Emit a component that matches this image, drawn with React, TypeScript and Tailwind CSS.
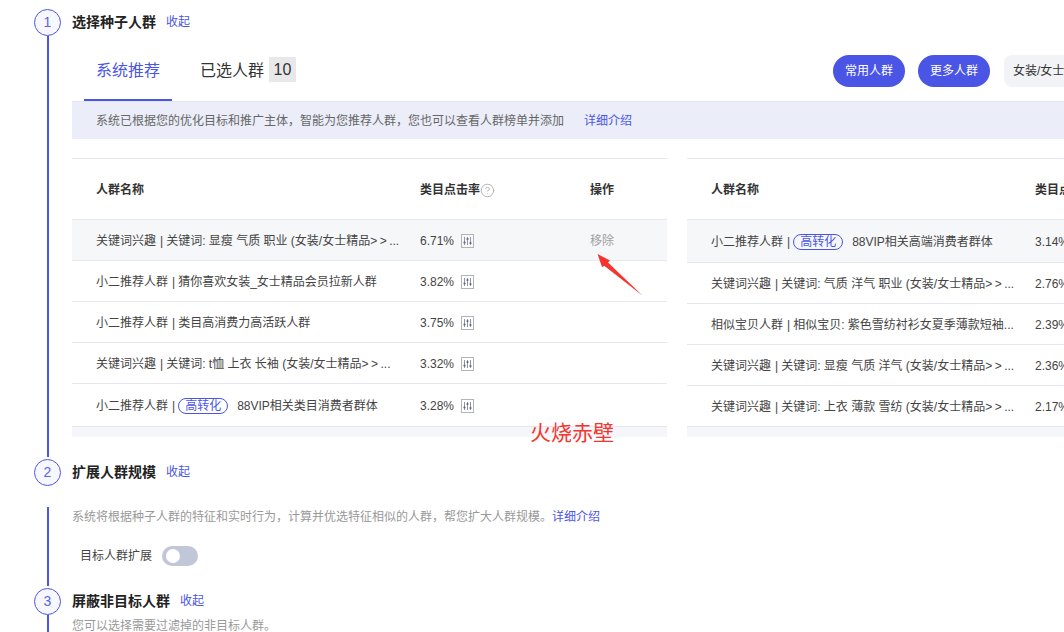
import { CircleHelp } from "lucide-react";

type Row = {
  tag: string;
  name: string;
  rate: string;
  high?: boolean;
};

const leftRows: Row[] = [
  { tag: "关键词兴趣", name: "关键词: 显瘦 气质 职业 (女装/女士精品>>...", rate: "6.71%" },
  { tag: "小二推荐人群", name: "猜你喜欢女装_女士精品会员拉新人群", rate: "3.82%" },
  { tag: "小二推荐人群", name: "类目高消费力高活跃人群", rate: "3.75%" },
  { tag: "关键词兴趣", name: "关键词: t恤 上衣 长袖 (女装/女士精品>>...", rate: "3.32%" },
  { tag: "小二推荐人群", name: "88VIP相关类目消费者群体", rate: "3.28%", high: true },
];

const rightRows: Row[] = [
  { tag: "小二推荐人群", name: "88VIP相关高端消费者群体", rate: "3.14%", high: true },
  { tag: "关键词兴趣", name: "关键词: 气质 洋气 职业 (女装/女士精品>>...", rate: "2.76%" },
  { tag: "相似宝贝人群", name: "相似宝贝: 紫色雪纺衬衫女夏季薄款短袖...", rate: "2.39%" },
  { tag: "关键词兴趣", name: "关键词: 显瘦 气质 洋气 (女装/女士精品>>...", rate: "2.36%" },
  { tag: "关键词兴趣", name: "关键词: 上衣 薄款 雪纺 (女装/女士精品>>...", rate: "2.17%" },
];

const StepCircle = ({ n }: { n: number }) => (
  <div className="w-[27px] h-[27px] shrink-0 rounded-full border border-[#4a55e5] bg-[#f7f8ff] flex items-center justify-center text-[14px] text-[#5a64e8]">
    {n}
  </div>
);

const TrendIcon = () => (
  <svg width="13" height="14" viewBox="0 0 13 14" fill="none" className="shrink-0">
    <rect x="0.5" y="0.5" width="12" height="13" stroke="#b4b4b4" />
    <path d="M3.5 3v8M6.5 3v8M9.5 3v8" stroke="#8a94b8" strokeWidth="1" />
    <circle cx="3.5" cy="8.5" r="1.1" fill="#666" />
    <circle cx="6.5" cy="5" r="1.1" fill="#666" />
    <circle cx="9.5" cy="9" r="1.1" fill="#666" />
  </svg>
);

const Name = ({ text }: { text: string }) => {
  const parts = text.split(">>");
  if (parts.length === 1) return <span>{text}</span>;
  return (
    <span>
      {parts[0]}
      <span className="tracking-[2.5px]">{">>"}</span>
      {parts[1]}
    </span>
  );
};

const NameCell = ({ row }: { row: Row }) => (
  <div className="flex items-center whitespace-nowrap">
    <span>{row.tag}</span>
    <span className="ml-[4px] mr-[3px]">|</span>
    {row.high && (
      <span className="h-[16px] w-[50px] rounded-full border border-[#4a55e5] text-[#4a55e5] flex items-center justify-center leading-none mr-[9px]">
        高转化
      </span>
    )}
    <Name text={row.name} />
  </div>
);

const LeftTable = () => (
  <div className="w-[595px] shrink-0">
    <div className="h-[62px] border-y border-[#e6e7f0] flex items-center pl-[24px] pt-[2px] font-bold text-[#333]">
      <div className="w-[324px]">人群名称</div>
      <div className="w-[170px] flex items-center">
        类目点击率
        <CircleHelp size={15} strokeWidth={1.4} className="text-[#aaa]" />
      </div>
      <div>操作</div>
    </div>
    {leftRows.map((row, i) => (
      <div
        key={row.name}
        className={`border-b border-[#e6e7f0] flex items-center pl-[24px] pt-[2px] text-[#444] ${
          i === 0 ? "bg-[#f6f7f9]" : ""
        } ${i === 4 ? "h-[43px]" : "h-[41px]"}`}
      >
        <div className="w-[324px]">
          <NameCell row={row} />
        </div>
        <div className="w-[170px] flex items-center gap-[7px]">
          {row.rate}
          <TrendIcon />
        </div>
        {i === 0 && <div className="text-[#a0a0a0]">移除</div>}
      </div>
    ))}
    <div className="h-[10px] bg-[#f5f6f9]" />
  </div>
);

const RightTable = () => (
  <div className="w-[400px] shrink-0">
    <div className="h-[62px] border-y border-[#e6e7f0] flex items-center pl-[24px] pt-[2px] font-bold text-[#333]">
      <div className="w-[324px] shrink-0">人群名称</div>
      <div className="whitespace-nowrap">类目点击率</div>
    </div>
    {rightRows.map((row, i) => (
      <div
        key={row.name}
        className={`border-b border-[#e6e7f0] flex items-center pl-[24px] pt-[2px] text-[#444] ${
          i === 0 ? "h-[43px] bg-[#f6f7f9]" : "h-[41px]"
        }`}
      >
        <div className="w-[324px] shrink-0">
          <NameCell row={row} />
        </div>
        <div>{row.rate}</div>
      </div>
    ))}
    <div className="h-[10px] bg-[#f5f6f9]" />
  </div>
);

const StepTitle = ({ title }: { title: string }) => (
  <div className="flex items-center h-[27px] pb-[1px] gap-[10px]">
    <span className="font-bold text-[14px] text-[#222]">{title}</span>
    <span className="text-[#4a55e5]">收起</span>
  </div>
);

export default function App() {
  return (
    <div
      className="relative w-[1064px] h-[632px] overflow-hidden bg-white text-[12px] text-[#333] pl-[34px] pt-[9px]"
      style={{ fontFamily: '"Liberation Sans", "Noto Sans CJK SC", sans-serif' }}
    >
      {/* step 1 */}
      <div className="flex h-[448px]">
        <div className="w-[27px] shrink-0 flex flex-col items-center">
          <StepCircle n={1} />
          <div className="w-[2px] h-[421px] bg-[#4a55e5]" />
        </div>
        <div className="ml-[11px] w-[1100px] shrink-0">
          <StepTitle title="选择种子人群" />
          <div className="flex items-start h-[65px] pt-[19px]">
            <div className="ml-[12px] w-[88px] h-[46px] border-b-2 border-[#4a55e5] text-[16px] leading-[32px] text-[#4a55e5] text-center">
              系统推荐
            </div>
            <div className="ml-[28px] h-[25px] mt-[2px] flex items-center text-[16px] text-[#333]">
              <span className="pt-[2px]">已选人群</span>
              <span className="h-[25px] w-[27px] bg-[#e8e8ea] flex items-center justify-center ml-[5px]">10</span>
            </div>
            <div className="ml-[537px] flex items-center gap-[13px]">
              <div className="w-[72px] h-[32px] rounded-full bg-[#4a55e5] text-white flex items-center justify-center">常用人群</div>
              <div className="w-[72px] h-[32px] rounded-full bg-[#4a55e5] text-white flex items-center justify-center">更多人群</div>
              <div className="w-[120px] h-[32px] rounded-[8px] bg-[#f2f3f6] flex items-center pl-[9px] ml-px whitespace-nowrap">女装/女士精品</div>
            </div>
          </div>
          <div className="h-[38px] bg-[#ebedf9] border-t border-[#e3e5f2] flex items-center pl-[24px] text-[#666]">
            系统已根据您的优化目标和推广主体，智能为您推荐人群，您也可以查看人群榜单并添加
            <span className="ml-[20px] text-[#4a55e5]">详细介绍</span>
          </div>
          <div className="flex gap-[20px] mt-[19px]">
            <LeftTable />
            <RightTable />
          </div>
        </div>
      </div>

      {/* step 2 */}
      <div className="flex h-[129px] mt-[2px]">
        <div className="w-[27px] shrink-0 flex flex-col items-center">
          <StepCircle n={2} />
          <div className="w-[2px] h-[79px] mt-[21px] bg-[#4a55e5]" />
        </div>
        <div className="ml-[11px]">
          <StepTitle title="扩展人群规模" />
          <div className="mt-[22px] text-[#999]">
            系统将根据种子人群的特征和实时行为，计算并优选特征相似的人群，帮您扩大人群规模。
            <span className="text-[#4a55e5]">详细介绍</span>
          </div>
          <div className="flex items-center mt-[20px] ml-[8px] text-[#444]">
            目标人群扩展
            <div className="ml-[10px] w-[36px] h-[20px] rounded-full bg-[#c1c6d9] flex items-center pl-[4px]">
              <div className="w-[14px] h-[14px] rounded-full bg-white" />
            </div>
          </div>
        </div>
      </div>

      {/* step 3 */}
      <div className="flex">
        <div className="w-[27px] shrink-0 flex flex-col items-center">
          <StepCircle n={3} />
          <div className="w-[2px] h-[20px] bg-[#4a55e5]" />
        </div>
        <div className="ml-[11px]">
          <StepTitle title="屏蔽非目标人群" />
          <div className="mt-[2px] text-[#999]">您可以选择需要过滤掉的非目标人群。</div>
        </div>
      </div>

      {/* annotations drawn over the screenshot */}
      <svg width="60" height="54" viewBox="0 0 60 54" fill="none" className="absolute left-[590px] top-[248px]">
        <path d="M7.5 6 L20 12.5 L18 14.5 L52.7 47.7 L14.5 18 L12 19 Z" fill="#f5352f" />
      </svg>
      <div className="absolute left-[530px] top-[419px] text-[21px] leading-[28px] text-[#f5352f]">火烧赤壁</div>
    </div>
  );
}
